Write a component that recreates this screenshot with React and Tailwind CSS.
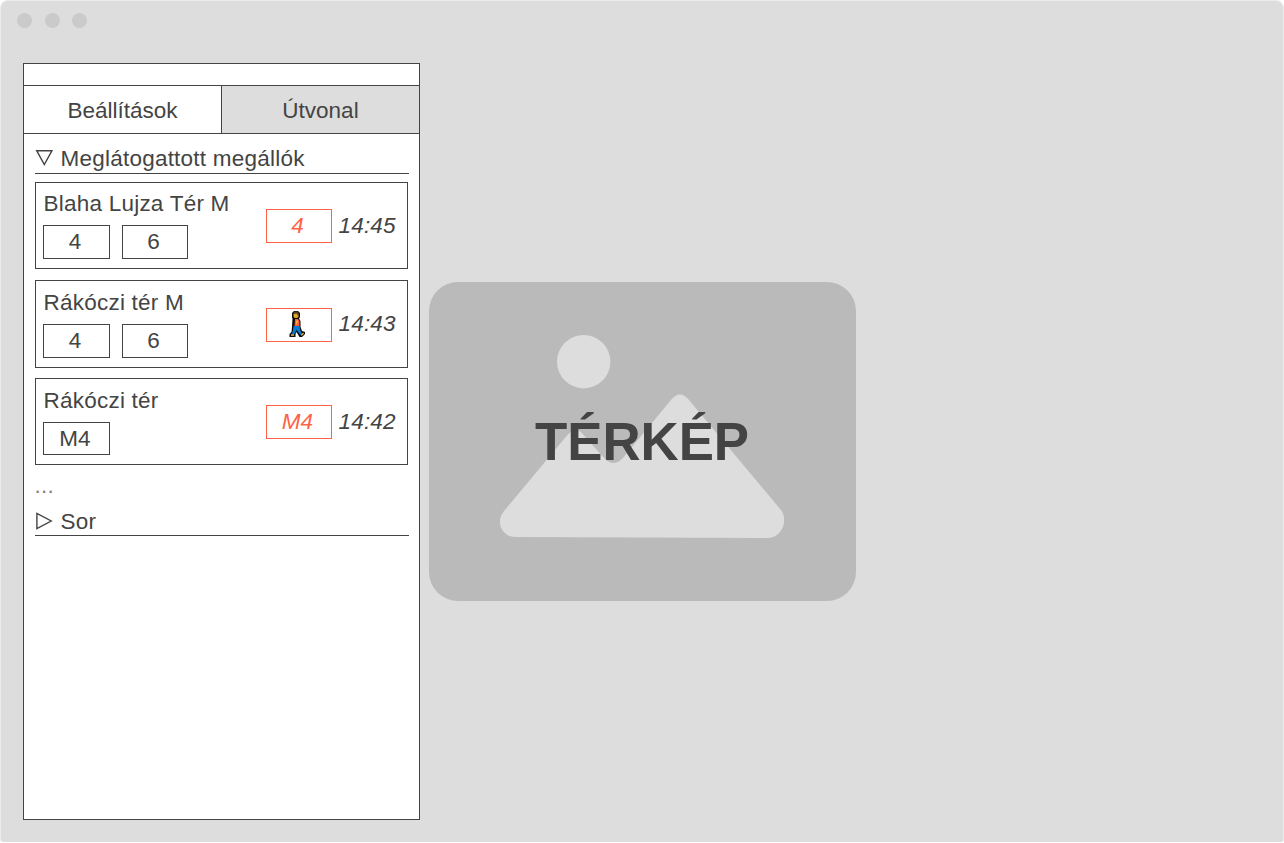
import { clsx } from "clsx";

const stops = [
  { name: "Blaha Lujza Tér M", lines: ["4", "6"], via: "4", time: "14:45", card: "h-[87px] mb-[11px]", chip: "h-[34px]", left: "pt-[7px]", right: "mt-[26px]", clock: "h-[26px]" },
  { name: "Rákóczi tér M", lines: ["4", "6"], via: "walk", time: "14:43", card: "h-[88px] mb-[10px]", chip: "h-[34px]", left: "pt-2", right: "mt-[27px]", clock: "h-7" },
  { name: "Rákóczi tér", lines: ["M4"], via: "M4", time: "14:42", card: "h-[87px]", chip: "h-[33px]", left: "pt-2", right: "mt-[26px]", clock: "h-[26px]" },
];

function Walker() {
  return (
    <svg className="mr-[2px] mb-[2px] h-7 w-4 shrink-0" viewBox="0 0 16 28">
      <path d="M5 1H9L11 3V7L10 8.500L11.500 11V17L13 21L16 22V24L13 27H10.500L7.500 22L6.500 24V27H0.500V24L2.500 22L3 17L3.500 9L3 7V3Z" fill="#080808" />
      <path d="M4.500 4L6 3H8.500L9.500 5V7L8 8H5.500L4.500 6.500Z" fill="#d9a62e" />
      <path d="M4 3L6 1.500H8.500L10 3.500V6L8.500 5L7.500 3.500L4.500 4Z" fill="#5b3d24" />
      <path d="M6 9H9L10.500 11V16H5.500Z" fill="#ff5a36" />
      <path d="M7 11L9 10V12L7 15Z" fill="#ffad42" />
      <path d="M4.500 16H10.500L11.500 21L13 23.500L11.500 25L7.500 20L5.500 24H3L4 20Z" fill="#0878d5" />
      <path d="M2 24.300H5V25.800H2ZM12 24.500L14 22.800L15 23.500L12.500 26Z" fill="#ffb52e" />
    </svg>
  );
}

function Heading({ open, children }) {
  return (
    <div className={clsx("flex h-[38px] w-[374px] items-center border-b border-[#444]", open ? "pt-[7px]" : "pt-[9px]")}>
      <svg className="mr-2 h-[18px] w-[18px] shrink-0" viewBox="0 0 18 18" fill="none" stroke="#444" strokeWidth="1.4">
        {open ? <path d="M1.700 1.700H17L9.300 15.600Z" /> : <path d="M1.900 1.300V16.700L16.200 9Z" />}
      </svg>
      <span className="relative -left-[0.5px] top-px tracking-[0.23px]">{children}</span>
    </div>
  );
}

function StopCard({ stop }) {
  return (
    <div className={clsx("flex w-[373px] justify-between border border-[#444] pl-[7px] pr-[11px]", stop.card)}>
      <div className={stop.left}>
        <div className="mb-[7px] h-7 pl-[0.5px] leading-7 tracking-[0.23px]">{stop.name}</div>
        <div className="flex gap-3">
          {stop.lines.map((line, i) => (
            <div key={line} className={clsx("flex items-center justify-center border border-[#444] pr-[3px]", stop.chip, i === 0 ? "w-[67px]" : "w-[66px]")}>
              {line}
            </div>
          ))}
        </div>
      </div>
      <div className={clsx("flex h-[34px] items-center gap-[6.5px] italic", stop.right)}>
        <div className="flex h-[34px] w-[66px] items-center justify-center border border-[#ff6347] pr-[3px] text-[#ff6347]">
          {stop.via === "walk" ? <Walker /> : stop.via}
        </div>
        <span className={clsx("w-[57.5px] tracking-[0.18px]", stop.clock)}>{stop.time}</span>
      </div>
    </div>
  );
}

export default function App() {
  return (
    <div className="h-[843px] w-[1284px] overflow-hidden bg-white font-['Liberation_Sans',sans-serif] text-[22.5px] leading-[26px] text-[#444]">
      <div className="flex h-[842px] flex-col rounded-t-lg rounded-b-[3px] border border-b-0 border-[#ececec] bg-[#ddd]">
        <div className="flex h-[62px] gap-[12.5px] pl-4 pt-3">
          <span className="size-[15px] rounded-full bg-[#cacaca]" />
          <span className="size-[15px] rounded-full bg-[#cacaca]" />
          <span className="size-[15px] rounded-full bg-[#cacaca]" />
        </div>
        <div className="flex">
          <aside className="ml-[22px] h-[757px] w-[397px] shrink-0 border border-[#444] bg-white">
            <div className="h-[22px] border-b border-[#444]" />
            <nav className="flex h-12 border-b border-[#444]">
              <div className="flex w-[198px] items-center justify-center border-r border-[#444] pt-0.5">Beállítások</div>
              <div className="flex flex-1 items-center justify-center bg-[#ddd] pt-0.5">Útvonal</div>
            </nav>
            <div className="pl-[11px] pt-[2px]">
              <Heading open>Meglátogattott megállók</Heading>
              <div className="pt-2">
                {stops.map((stop) => (
                  <StopCard key={stop.name} stop={stop} />
                ))}
              </div>
              <div className="-ml-[0.5px] h-[33px] pt-2 tracking-[0.23px] text-[#808080]">...</div>
              <Heading>Sor</Heading>
            </div>
          </aside>
          <main className="ml-[9px] mt-[219px] grid h-[319px] w-[427px] place-items-center rounded-[29px] bg-[#bababa]">
            <svg className="col-start-1 row-start-1 h-[319px] w-[427px]" viewBox="0 0 427 319" fill="#ddd">
              <circle cx="154.7" cy="79.7" r="26.7" />
              <path d="M75 229 L138 153.500 Q147 143 155 153.500 L176 177 Q184.500 185 193 177 L242 118 Q251 107 260 118 L352 228 C360 239 352 256 339 256 L86 255 C73 255 66 240 75 229Z" />
            </svg>
            <h1 className="relative -left-[0.5px] col-start-1 row-start-1 text-[52.8px] font-bold leading-[60px]">TÉRKÉP</h1>
          </main>
        </div>
      </div>
    </div>
  );
}
